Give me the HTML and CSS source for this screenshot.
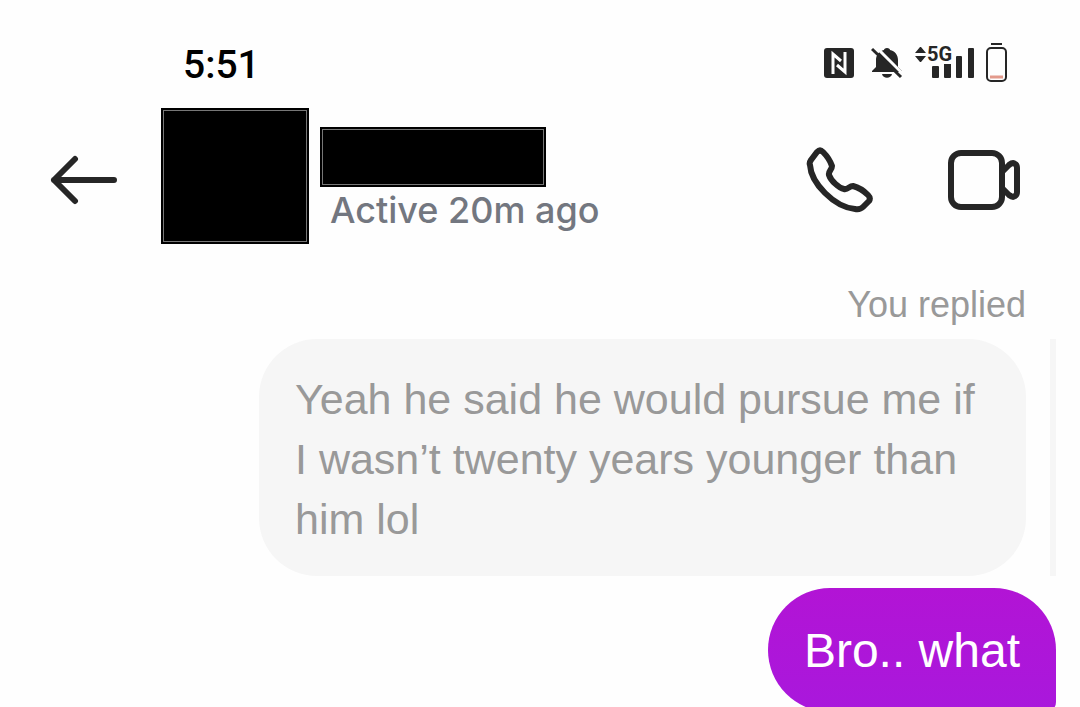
FILE: index.html
```html
<!DOCTYPE html>
<html lang="en">
<head>
    <meta charset="UTF-8">
    <meta name="viewport" content="width=device-width, initial-scale=1.0">
    <title>Chat</title>
    <link rel="stylesheet" href="styles.css">
</head>
<body>
    <div class="status-bar">
        <span class="time">5:51</span>
        <div class="status-icons">
            <svg class="nfc" width="30" height="32" viewBox="0 0 30 32" aria-hidden="true">
                <rect x="0" y="1" width="30" height="30" rx="3" fill="#262626"/>
                <path d="M9 27V7l8 7M21 5v20l-8-7" fill="none" stroke="#fefefe" stroke-width="3"/>
            </svg>
            <svg class="bell" width="32" height="32" viewBox="0 0 32 32" aria-hidden="true">
                <path d="M16 1c-2 0-3 1-3 2-5 1-8 5-8 10v7l-4 4v1h30v-1l-4-4v-7c0-5-3-9-8-10 0-1-1-2-3-2z" fill="#262626"/>
                <path d="M11 27h10c-1 5-9 5-10 0z" fill="#262626"/>
                <path d="M4-1l31 31" stroke="#fefefe" stroke-width="3"/>
                <path d="M1 2l29 28" stroke="#262626" stroke-width="3"/>
            </svg>
            <div class="signal">
                <svg width="60" height="36" viewBox="0 0 60 36" aria-hidden="true">
                    <path d="M0 8l5-6h1l5 6zM0 11h11l-5 6H5z" fill="#262626"/>
                    <g fill="#262626">
                        <rect x="17" y="21" width="7" height="12" rx="1"/>
                        <rect x="29" y="18" width="7" height="15" rx="1"/>
                        <rect x="41" y="11" width="6" height="22" rx="1"/>
                        <rect x="53" y="3" width="6" height="30" rx="1"/>
                    </g>
                </svg>
                <span class="network">5G</span>
            </div>
            <svg class="battery" width="22" height="40" viewBox="0 0 22 40" aria-hidden="true">
                <path d="M5 1h11" stroke="#262626" stroke-width="2"/>
                <rect x="1" y="5" width="19" height="33" rx="4" fill="none" stroke="#262626" stroke-width="2"/>
                <path d="M4 34h13" stroke="#e39a8c" stroke-width="3"/>
            </svg>
        </div>
    </div>

    <header class="header">
        <button class="icon-btn back" aria-label="Back">
            <svg width="68" height="50" viewBox="0 0 68 50">
                <path d="M64 25H4M25 4L4 25l21 21" fill="none" stroke="#262626" stroke-width="6" stroke-linecap="round" stroke-linejoin="round"/>
            </svg>
        </button>
        <div class="avatar"></div>
        <div class="user">
            <div class="name"></div>
            <div class="active">Active 20m ago</div>
        </div>
        <button class="icon-btn call" aria-label="Audio call">
            <svg width="68" height="68" viewBox="0 0 68 68">
                <path d="M5 14L11 6Q14 3 17 6C21 10 25 17 26 20C26 24 22 25 23 29C25 35 33 42 38 43C42 44 43 40 47 40C51 41 58 45 62 49Q65 52 63 55L57 61Q54 64 49 63C28 61 5 37 4 19Q3 17 5 14Z" fill="none" stroke="#262626" stroke-width="6" stroke-linejoin="round"/>
            </svg>
        </button>
        <button class="icon-btn" aria-label="Video call">
            <svg width="74" height="60" viewBox="0 0 74 60">
                <rect x="4" y="3" width="51" height="54" rx="10" fill="none" stroke="#262626" stroke-width="6"/>
                <path d="M55 22l7-7q4-3 6-1 2 1 2 4v24q0 3-2 4-2 2-6-1l-7-7" fill="none" stroke="#262626" stroke-width="6" stroke-linejoin="round"/>
            </svg>
        </button>
    </header>

    <main class="messages">
        <p class="reply-label">You replied</p>
        <div class="quote">
            <p class="bubble quoted">Yeah he said he would pursue me if I wasn’t twenty years younger than him lol</p>
        </div>
        <p class="bubble sent">Bro.. what</p>
    </main>
</body>
</html>
```

FILE: styles.css
```css
body {
    font-family: "Liberation Sans", Arial, sans-serif;
    background-color: #fefefe;
    color: #262626;
    margin: 0;
    height: 100vh;
    overflow: hidden;
}

p {
    margin: 0;
}

svg {
    display: block;
}

.status-bar {
    display: flex;
    justify-content: space-between;
    align-items: center;
    height: 48px;
    padding: 40px 72px 20px 183px;
    font-family: Roboto, sans-serif;
}

.time {
    padding-top: 2px;
    font-size: 39px;
    font-weight: 500;
    color: #000;
}

.status-icons {
    display: flex;
    align-items: center;
    padding-bottom: 2px;
}

.bell {
    margin: 0 12px 0 17px;
}

.signal {
    position: relative;
    margin-right: 11px;
}

.network {
    position: absolute;
    left: 12px;
    top: -1px;
    background-color: #fefefe;
    font-size: 20px;
    font-weight: 700;
    line-height: 20px;
}

.header {
    display: flex;
    align-items: center;
    min-height: 144px;
    padding: 0 59px 0 50px;
}

.icon-btn {
    padding: 0;
    border: none;
    background: none;
    cursor: pointer;
}

.back {
    margin-right: 43px;
}

.call {
    margin-right: 73px;
}

.avatar,
.name {
    box-sizing: border-box;
    background-color: #000;
    border: 1px solid #000;
    outline: 1px solid #777;
    outline-offset: -3px;
}

.avatar {
    align-self: flex-start;
    width: 148px;
    height: 136px;
    margin-right: 11px;
}

.user {
    flex: 1;
}

.name {
    width: 226px;
    height: 60px;
}

.active {
    padding-left: 10px;
    font-family: Inter, sans-serif;
    font-size: 36px;
    font-weight: 500;
    line-height: 46px;
    color: #737780;
}

.messages {
    display: flex;
    flex-direction: column;
    align-items: flex-end;
    padding: 29px 24px 0;
}

.reply-label {
    margin: 0 30px 10px 0;
    font-size: 36px;
    line-height: 48px;
    color: #999;
}

.quote {
    padding-right: 24px;
    margin-bottom: 12px;
    border-right: 6px solid #f6f6f6;
}

.bubble {
    box-sizing: border-box;
    padding: 30px 36px 27px;
}

.quoted {
    max-width: 767px;
    border-radius: 58px;
    background-color: #f6f6f6;
    font-size: 43px;
    line-height: 60px;
    color: #999;
}

.sent {
    padding: 33px 36px 31px;
    border-radius: 62px 62px 10px 62px;
    background: linear-gradient(#b214d5, #a918dc);
    font-size: 48px;
    line-height: 60px;
    color: #fff;
}
```
